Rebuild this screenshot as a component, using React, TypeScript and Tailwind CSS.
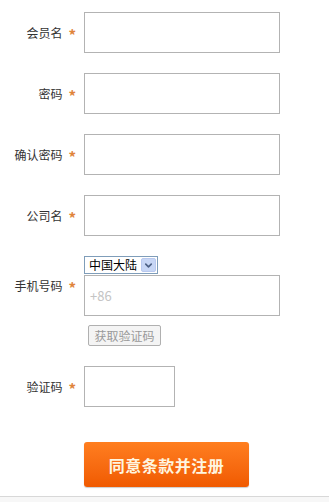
import { ChevronDown } from 'lucide-react'

const fields = ['会员名', '密码', '确认密码', '公司名']

function Label({ text }: { text: string }) {
  return (
    <div className="w-[84px] shrink-0 flex items-center justify-end pr-[8px] text-[12px] text-[#333]">
      <span>{text}</span>
      <span className="ml-[6px] mt-[3px] text-[#e0843a] text-[15px] leading-none font-bold">*</span>
    </div>
  )
}

export default function App() {
  return (
    <div
      className="w-[329px] h-[502px] bg-white flex flex-col overflow-hidden"
      style={{ fontFamily: '"Noto Sans CJK SC", "Noto Sans", sans-serif' }}
    >
      <div className="flex flex-col gap-[20px] pt-[12px]">
        {fields.map((f) => (
          <div key={f} className="flex items-center">
            <Label text={f} />
            <div className="w-[196px] h-[41px] border border-[#b3b3b3] bg-white" />
          </div>
        ))}

        <div className="flex flex-col">
          <div className="flex items-center">
            <Label text="手机号码" />
            <div className="flex flex-col gap-[1px]">
              <div className="w-[74px] h-[18px] border border-[#7f9db9] flex items-center justify-between pl-[4px] pr-[1px] text-[12px] text-black leading-none">
                <span>中国大陆</span>
                <span className="w-[15px] h-[14px] rounded-[2px] border border-[#b9c9ef] bg-[#c7d6f5] flex items-center justify-center">
                  <ChevronDown className="w-[11px] h-[11px] text-[#4d6185]" strokeWidth={3.5} />
                </span>
              </div>
              <div className="w-[196px] h-[41px] border border-[#b3b3b3] flex items-center pl-[5px] text-[13px] text-[#c4c4c4]">
                +86
              </div>
            </div>
          </div>
          <div className="ml-[88px] mt-[9px] w-[73px] h-[21px] border border-[#b0b0b0] rounded-[2px] bg-[#f4f4f4] flex items-center justify-center text-[12px] text-[#999]">
            获取验证码
          </div>
        </div>

        <div className="flex items-center">
          <Label text="验证码" />
          <div className="w-[91px] h-[41px] border border-[#b3b3b3] bg-white" />
        </div>
      </div>

      <div className="ml-[84px] mt-[35px] w-[165px] h-[45px] rounded-[3px] bg-gradient-to-b from-[#ff7e1f] to-[#f05a00] shadow-[0_1px_1px_rgba(0,0,0,0.2)] flex items-center justify-center text-[16px] text-[#fff6e0] font-bold tracking-[0.5px]">
        同意条款并注册
      </div>

      <div className="mt-[9px] flex-1 border-t border-[#d8d8d8] bg-[#f7f7f7]" />
    </div>
  )
}
